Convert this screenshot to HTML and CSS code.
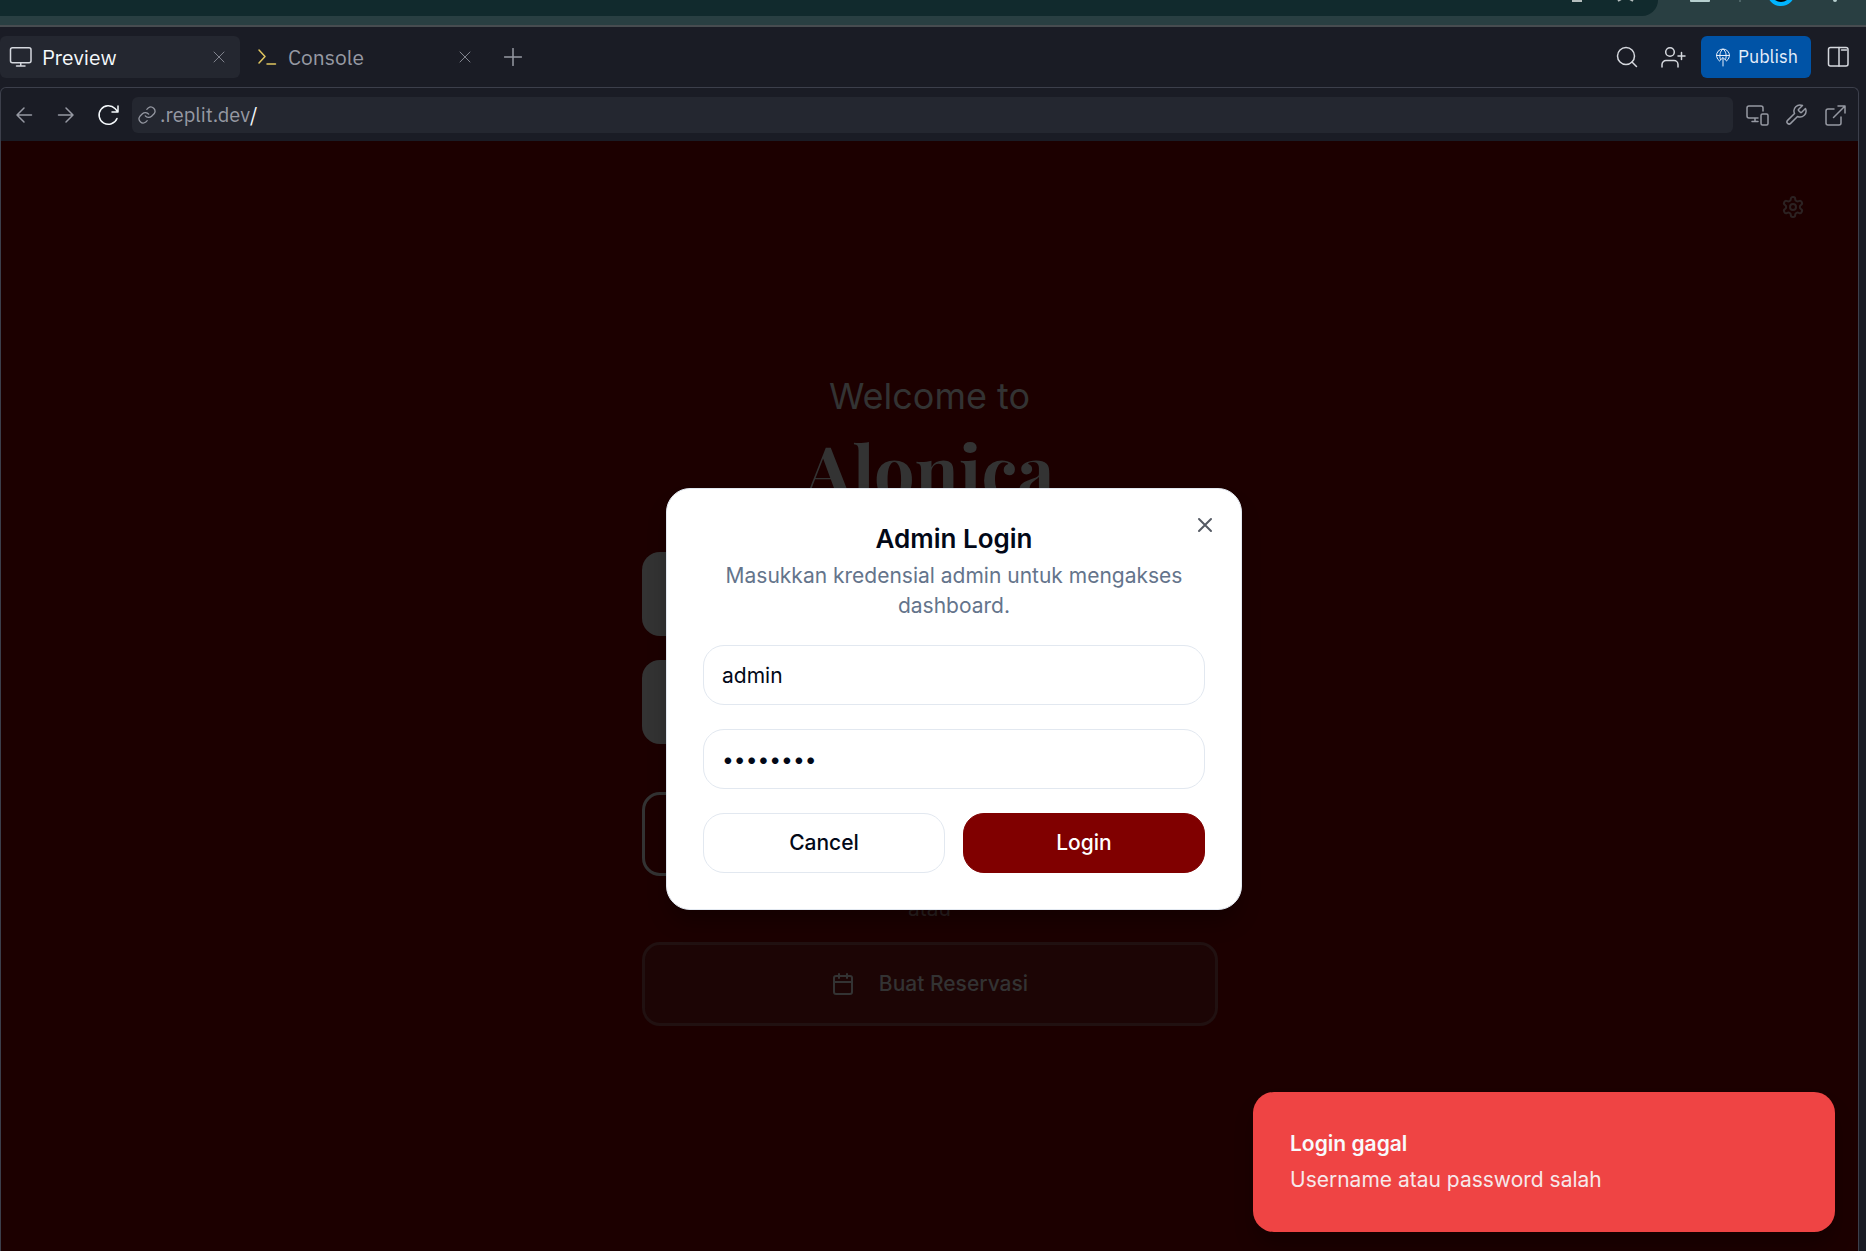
FILE: index.html
```html
<!DOCTYPE html>
<html lang="id">
<head>
<meta charset="utf-8">
<meta name="viewport" content="width=device-width, initial-scale=1">
<title>Preview - Alonica</title>
<link rel="stylesheet" href="styles.css">
</head>
<body>
<div class="browser-bar">
  <div class="address-edge"></div>
  <svg class="browser-icons" width="326" height="16" viewBox="0 0 326 16" aria-hidden="true">
    <path d="M32 0h10v2H32z" fill="#b4bdbd"/>
    <path d="M78 1l5-3M93 1l-5-3" stroke="#b4bdbd" stroke-width="2"/>
    <path d="M150 0h20v1q0 1-1 1h-18q-1 0-1-1z" fill="#b6cfcf"/>
    <path d="M200 0v2" stroke="#4d6467" stroke-width="2"/>
    <circle cx="241" cy="-8" r="12" fill="#000" stroke="#00b4ff" stroke-width="4"/>
    <circle cx="295" cy="0" r="2" fill="#b6cfcf"/>
  </svg>
</div>

<header class="tab-bar">
  <div class="tabs">
    <div class="tab tab-active">
      <button class="tab-label" type="button">
        <svg class="icon" width="24" height="24" viewBox="0 0 24 24"><rect x="2.500" y="2.700" width="20.500" height="15" rx="2"/><path d="M12.750 18v3M8.500 21h8.500"/></svg>
        Preview
      </button>
      <button class="tab-close" type="button" aria-label="Close Preview"><svg class="icon thin" width="12" height="12" viewBox="0 0 12 12"><path d="M1 1l10 10M11 1L1 11"/></svg></button>
    </div>
    <div class="tab">
      <button class="tab-label" type="button">
        <svg class="icon prompt" width="24" height="24" viewBox="0 0 24 24"><path d="M5 5l6 6.500-6 6.500M13 19h8.500"/></svg>
        Console
      </button>
      <button class="tab-close" type="button" aria-label="Close Console"><svg class="icon thin" width="12" height="12" viewBox="0 0 12 12"><path d="M1 1l10 10M11 1L1 11"/></svg></button>
    </div>
    <button class="tab-add" type="button" aria-label="New tab"><svg class="icon" width="18" height="18" viewBox="0 0 18 18"><path d="M9 .5v17M.5 9h17"/></svg></button>
  </div>
  <div class="actions">
    <button class="icon-button search" type="button" aria-label="Search"><svg class="icon" width="24" height="24" viewBox="0 0 24 24"><circle cx="11" cy="11" r="8.500"/><path d="M17 17l4.500 4.500"/></svg></button>
    <button class="icon-button" type="button" aria-label="Invite"><svg class="icon" width="26" height="24" viewBox="0 0 26 24"><circle cx="10" cy="7" r="4.300"/><path d="M2 22v-2.500a4 4 0 0 1 4-4h8a4 4 0 0 1 4 4V22M21.500 7.500v7M18 11h7"/></svg></button>
    <button class="publish" type="button">
      <svg class="icon" width="18" height="20" viewBox="0 0 18 20"><path d="M5.500 14A6.500 6.500 0 1 1 12.500 14M2.500 8.500h13M6.500 12.500C5 9 6 4 9 2c3 2 4 7 2.500 10.500M9 19v-8M6 13.500l3-3 3 3"/></svg>
      Publish
    </button>
    <button class="icon-button" type="button" aria-label="Toggle panel"><svg class="icon" width="24" height="24" viewBox="0 0 24 24"><rect x="2.500" y="2.500" width="19.500" height="18.500" rx="2"/><path d="M13 2.500v18.500M15.500 5h5"/></svg></button>
  </div>
</header>

<main class="pane">
  <div class="toolbar">
    <button class="nav" type="button" aria-label="Back"><svg class="icon" width="18" height="18" viewBox="0 0 18 18"><path d="M16.500 9h-14M9 2L2 9l7 7"/></svg></button>
    <button class="nav" type="button" aria-label="Forward"><svg class="icon" width="18" height="18" viewBox="0 0 18 18"><path d="M1.500 9h14M9 2l7 7-7 7"/></svg></button>
    <button class="nav nav-bright" type="button" aria-label="Reload"><svg class="icon" width="24" height="24" viewBox="0 0 24 24"><path d="M21 15.500A9.300 9.300 0 1 1 19 5.500L22 9M22 3v6h-6"/></svg></button>
    <a class="address" href="#">
      <svg class="icon link" width="20" height="20" viewBox="0 0 24 24"><path d="M10 13a5 5 0 0 0 7.500.5l3-3a5 5 0 0 0-7-7L11.800 5.200M14 11a5 5 0 0 0-7.500-.5l-3 3a5 5 0 0 0 7 7l1.700-1.700"/></svg>
      <span>.replit.dev<b>/</b></span>
    </a>
    <div class="tools">
      <button class="nav" type="button" aria-label="Devices"><svg class="icon" width="24" height="24" viewBox="0 0 24 24"><path d="M13 15H4a2 2 0 0 1-2-2V5a2 2 0 0 1 2-2h12a2 2 0 0 1 2 2v3M7 18.500h6M10 15v3.500"/><rect x="16" y="11" width="7" height="11" rx="1.500"/></svg></button>
      <button class="nav" type="button" aria-label="Developer tools"><svg class="icon" width="24" height="24" viewBox="0 0 24 24"><path d="M14.700 6.300a1 1 0 0 0 0 1.400l1.600 1.600a1 1 0 0 0 1.400 0l3.770-3.770a6 6 0 0 1-7.940 7.940l-6.910 6.910a2.120 2.120 0 0 1-3-3l6.910-6.910a6 6 0 0 1 7.940-7.940z"/></svg></button>
      <button class="nav" type="button" aria-label="Open in new window"><svg class="icon" width="24" height="24" viewBox="0 0 24 24"><path d="M11 6H5a2 2 0 0 0-2 2v12a2 2 0 0 0 2 2h11a2 2 0 0 0 2-2v-6M15 3h7v7M10.500 14.500L22 3"/></svg></button>
    </div>
  </div>

  <div class="site">
    <button class="settings" type="button" aria-label="Settings"><svg class="icon" width="24" height="24" viewBox="0 0 24 24"><path d="M12.220 2h-.44a2 2 0 0 0-2 2v.18a2 2 0 0 1-1 1.730l-.43.25a2 2 0 0 1-2 0l-.15-.08a2 2 0 0 0-2.730.73l-.22.380a2 2 0 0 0 .73 2.730l.15.100a2 2 0 0 1 1 1.720v.510a2 2 0 0 1-1 1.740l-.15.090a2 2 0 0 0-.73 2.730l.22.380a2 2 0 0 0 2.730.730l.15-.080a2 2 0 0 1 2 0l.43.250a2 2 0 0 1 1 1.730V20a2 2 0 0 0 2 2h.44a2 2 0 0 0 2-2v-.18a2 2 0 0 1 1-1.730l.43-.25a2 2 0 0 1 2 0l.15.080a2 2 0 0 0 2.730-.73l.22-.39a2 2 0 0 0-.73-2.730l-.15-.08a2 2 0 0 1-1-1.740v-.5a2 2 0 0 1 1-1.740l.15-.09a2 2 0 0 0 .73-2.730l-.22-.38a2 2 0 0 0-2.730-.73l-.15.080a2 2 0 0 1-2 0l-.43-.25a2 2 0 0 1-1-1.730V4a2 2 0 0 0-2-2z"/><circle cx="12" cy="12" r="3"/></svg></button>

    <div class="welcome">
      <p class="greeting">Welcome to</p>
      <h1 class="brand">Alonica</h1>
      <div class="choices">
        <div class="choice choice-solid"></div>
        <div class="choice choice-solid"></div>
      </div>
      <div class="choice choice-outline"></div>
      <p class="or">atau</p>
      <button class="choice choice-reserve" type="button">
        <svg class="icon" width="24" height="24" viewBox="0 0 24 24"><path d="M8 2v4M16 2v4M3 10h18"/><rect x="3" y="4" width="18" height="18" rx="2"/></svg>
        Buat Reservasi
      </button>
    </div>

    <div class="overlay">
      <form class="dialog" role="dialog" aria-labelledby="dialog-title">
        <button class="dialog-close" type="button" aria-label="Close"><svg class="icon" width="24" height="24" viewBox="0 0 24 24"><path d="M18 6L6 18M6 6l12 12"/></svg></button>
        <div class="dialog-head">
          <h2 class="dialog-title" id="dialog-title">Admin Login</h2>
          <p class="dialog-text">Masukkan kredensial admin untuk mengakses dashboard.</p>
        </div>
        <input class="field" type="text" value="admin" aria-label="Username">
        <input class="field" type="password" value="password" aria-label="Password">
        <div class="dialog-actions">
          <button class="button" type="button">Cancel</button>
          <button class="button button-primary" type="button">Login</button>
        </div>
      </form>
    </div>

    <div class="toast" role="alert">
      <strong class="toast-title">Login gagal</strong>
      <span class="toast-text">Username atau password salah</span>
    </div>
  </div>
</main>
</body>
</html>
```

FILE: styles.css
```css
* {
  box-sizing: border-box;
}

body {
  margin: 0;
  min-height: 100vh;
  display: flex;
  flex-direction: column;
  background: #1a1c25;
  color: #f5f9fc;
  font-family: Inter, "Liberation Sans", sans-serif;
  font-size: 21px;
  line-height: 30px;
}

h1, h2, p {
  margin: 0;
}

button {
  margin: 0;
  padding: 0;
  border: 0;
  background: none;
  color: inherit;
  font: inherit;
}

.icon {
  display: block;
  flex: none;
  fill: none;
  stroke: currentColor;
  stroke-width: 1.5;
  stroke-linecap: round;
  stroke-linejoin: round;
}

.thin {
  stroke-width: 1;
}

/* Lower edge of the browser window */
.browser-bar {
  position: relative;
  height: 27px;
  padding-right: 208px;
  background: #293f42;
  border-bottom: 2px solid #474c50;
}

.address-edge {
  height: 16px;
  background: #112a2d;
  border-bottom-right-radius: 24px;
}

.browser-icons {
  position: absolute;
  top: 0;
  right: 0;
}

/* Workspace tabs */
.tab-bar,
.toolbar {
  display: flex;
  align-items: center;
  font-family: "IBM Plex Sans", Roboto, "Liberation Sans", sans-serif;
}

.tab-bar {
  justify-content: space-between;
  height: 60px;
  padding-right: 16px;
  font-size: 21px;
}

.tabs,
.actions,
.tools {
  display: flex;
  align-items: center;
}

.tabs {
  gap: 6px;
}

.tab {
  display: flex;
  align-items: center;
  justify-content: space-between;
  width: 240px;
  height: 42px;
  padding: 0 15px 0 8px;
  border-radius: 6px;
  color: #9699a3;
}

.tab-active {
  background: #242730;
  color: #f5f9fc;
}

.tab-label {
  display: flex;
  align-items: center;
  gap: 10px;
}

.tab-label .icon {
  color: #d5d8de;
}

.tab-label .prompt {
  color: #e0c55f;
}

.tab-close {
  color: #80838d;
}

.tab-add {
  margin-left: 12px;
  color: #9699a3;
}

.actions {
  gap: 15px;
}

.icon-button {
  color: #d5d8de;
}

.search {
  margin-right: 6px;
}

.publish {
  display: flex;
  align-items: center;
  gap: 6px;
  height: 42px;
  padding: 0 13px;
  border-radius: 6px;
  background: #0053a6;
  color: #e6eefa;
  font-size: 18px;
}

.publish .icon {
  stroke-width: 1;
}

/* Preview pane */
.pane {
  flex: 1;
  display: flex;
  flex-direction: column;
  margin-right: 7px;
  border: 1px solid #3c3f4b;
  border-bottom: 0;
  border-radius: 6px 6px 0 0;
}

.toolbar {
  height: 53px;
  padding: 0 11px 0 14px;
  font-size: 20px;
}

.nav {
  color: #9699a3;
}

.nav + .nav {
  margin-left: 24px;
}

.toolbar > .nav-bright {
  margin-left: 21px;
  color: #f5f9fc;
}

.address {
  flex: 1;
  display: flex;
  align-items: center;
  gap: 3px;
  height: 36px;
  margin: 0 12px;
  padding: 0 5px;
  border-radius: 6px;
  background: #242730;
  color: #9699a3;
  text-decoration: none;
}

.address b {
  color: #f5f9fc;
  font-weight: 400;
}

.tools .nav + .nav {
  margin-left: 15px;
}

.site {
  position: relative;
  flex: 1;
  display: flex;
  flex-direction: column;
  align-items: center;
  justify-content: center;
  padding-top: 6px;
  background: #1c0000;
  color: #333;
}

.settings {
  position: absolute;
  top: 54px;
  right: 53px;
  color: #2c2222;
}

.settings .icon,
.choice .icon,
.dialog-close .icon {
  stroke-width: 2;
}

.welcome {
  display: flex;
  flex-direction: column;
  width: 576px;
  max-width: 100%;
  text-align: center;
}

.greeting {
  margin-bottom: 12px;
  font-size: 36px;
  line-height: 48px;
}

.brand {
  margin-bottom: 48px;
  font-family: "Playfair Display", "Liberation Serif", serif;
  font-size: 72px;
  font-weight: 700;
  line-height: 72px;
}

.choices {
  display: flex;
  flex-direction: column;
  gap: 24px;
  margin-bottom: 48px;
}

.choice {
  height: 84px;
  border-radius: 18px;
}

.choice-solid {
  background: #333;
}

.choice-outline {
  border: 3px solid #333;
}

.or {
  margin: 18px 0;
  color: #2a2020;
}

.choice-reserve {
  display: flex;
  align-items: center;
  justify-content: center;
  gap: 24px;
  border: 3px solid #211111;
  background: #1c0505;
  font-weight: 500;
}

.overlay {
  position: absolute;
  inset: 0;
  display: flex;
  align-items: center;
  justify-content: center;
  padding: 6px 0 0 49px;
}

.dialog {
  position: relative;
  display: flex;
  flex-direction: column;
  gap: 24px;
  width: 576px;
  max-width: 100%;
  padding: 36px;
  border: 1px solid #e2e8f0;
  border-radius: 24px;
  background: #fff;
  box-shadow: 0 15px 22px -4px rgba(0, 0, 0, .3);
  color: #020817;
}

.dialog-close {
  position: absolute;
  top: 24px;
  right: 24px;
  color: #555a64;
}

.dialog-head {
  display: flex;
  flex-direction: column;
  gap: 9px;
  text-align: center;
}

.dialog-title {
  font-size: 26px;
  font-weight: 600;
  line-height: 27px;
}

.dialog-text {
  color: #64748b;
}

.field {
  width: 100%;
  height: 60px;
  padding: 0 18px;
  border: 1px solid #e2e8f0;
  border-radius: 21px;
  background: #fff;
  color: #020817;
  font: inherit;
}

.dialog-actions {
  display: flex;
  gap: 18px;
}

.button {
  flex: 1;
  height: 60px;
  border: 1px solid #e2e8f0;
  border-radius: 21px;
  font-weight: 500;
}

.button-primary {
  border-color: #800000;
  background: #800000;
  color: #fff;
}

.toast {
  position: absolute;
  right: 23px;
  bottom: 19px;
  display: flex;
  flex-direction: column;
  gap: 6px;
  width: 582px;
  max-width: 100%;
  padding: 37px;
  border-radius: 21px;
  background: #ef4444;
  box-shadow: 0 15px 22px -4px rgba(0, 0, 0, .3);
  color: #f8fafc;
}

.toast-title {
  font-weight: 600;
}

.toast-text {
  opacity: .9;
}
```
